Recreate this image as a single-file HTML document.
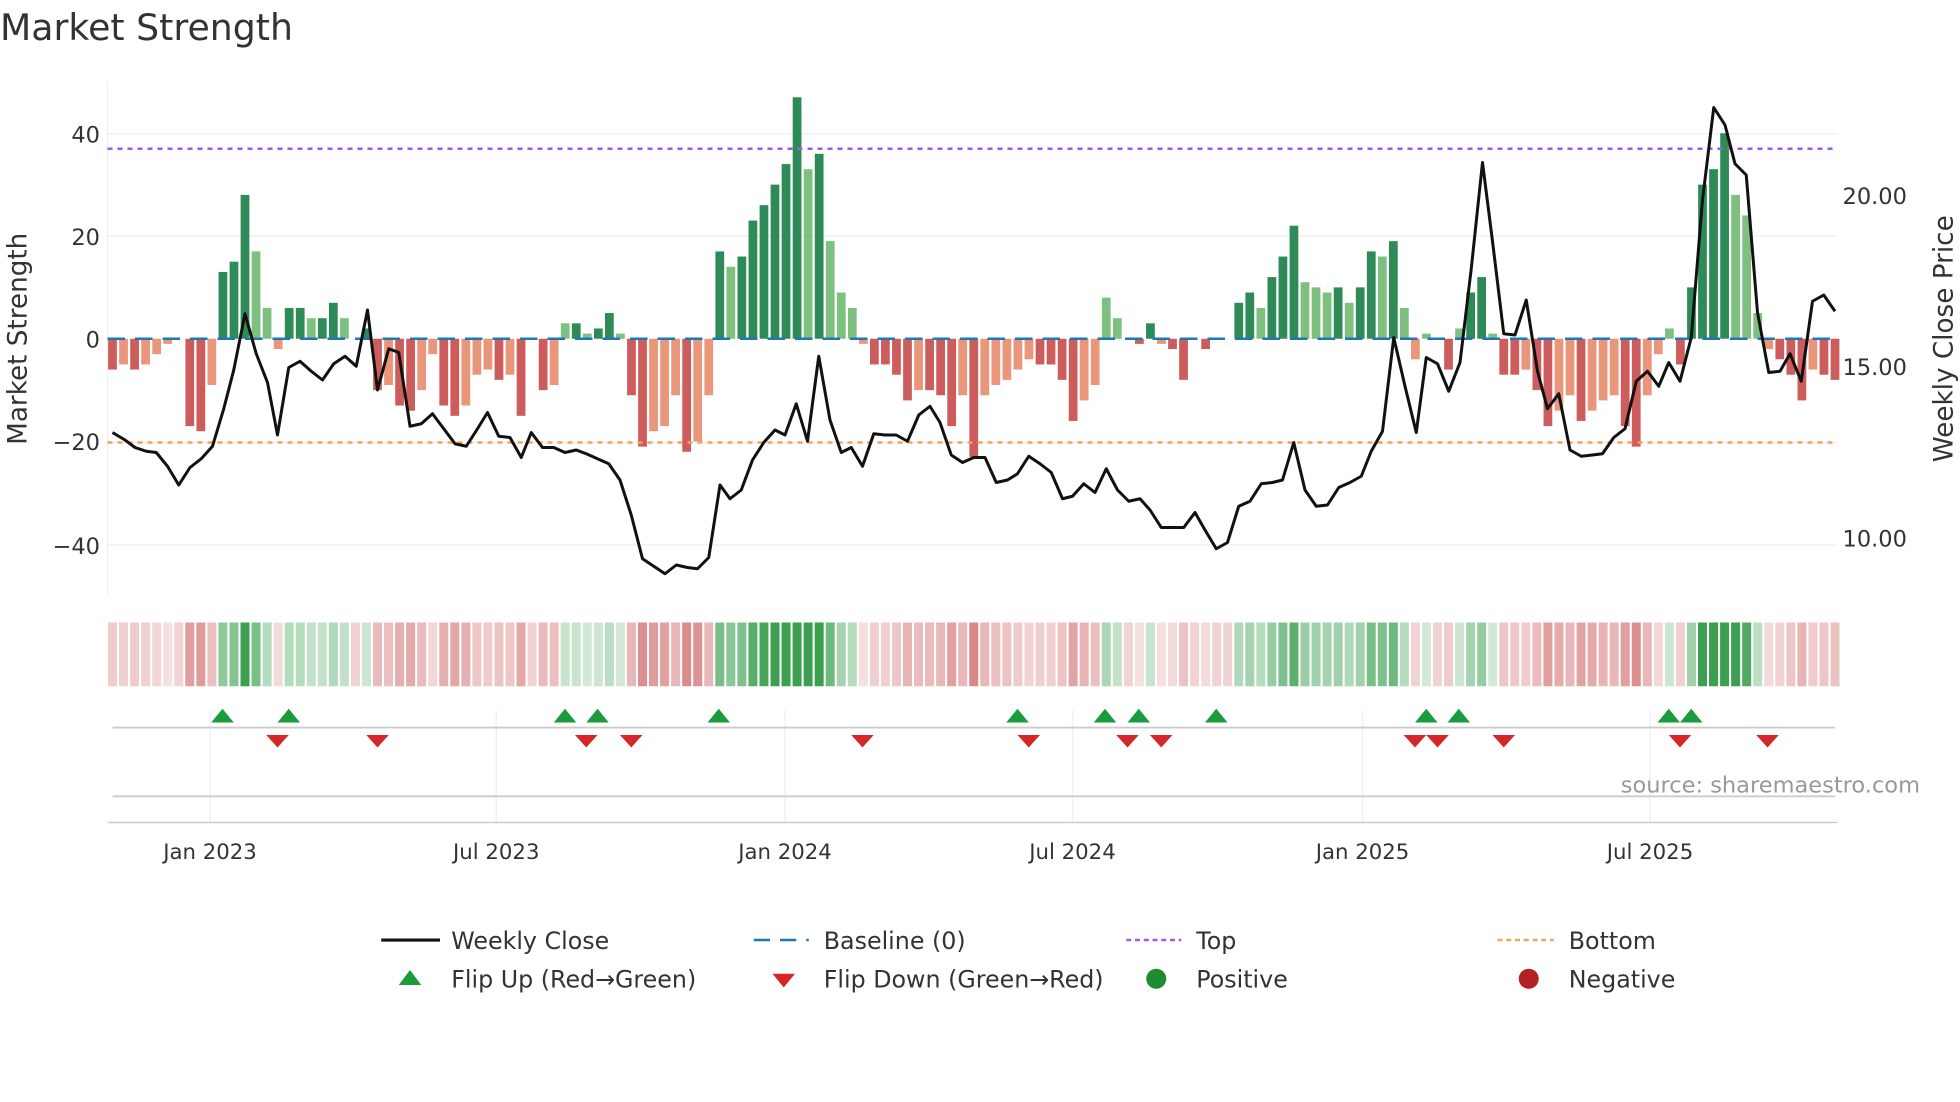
<!DOCTYPE html>
<html><head><meta charset="utf-8"><style>
html,body{margin:0;padding:0;background:#fff;width:1960px;height:1102px;overflow:hidden}
svg{display:block}
text{font-family:"DejaVu Sans","Liberation Sans",sans-serif;fill:#333}
</style></head><body>
<svg id="s" width="1960" height="1102" viewBox="0 0 1568 881.6" xmlns="http://www.w3.org/2000/svg">
<text x="0" y="32" font-size="29">Market Strength</text>
<line x1="86" y1="65" x2="86" y2="478" stroke="#eef0f4"/>
<g stroke="#eef0f4" stroke-width="1.2">
<line x1="86" y1="107" x2="1470" y2="107"/><line x1="86" y1="189" x2="1470" y2="189"/>
<line x1="86" y1="354" x2="1470" y2="354"/><line x1="86" y1="436" x2="1470" y2="436"/>
</g>
<g font-size="18" text-anchor="end">
<text x="80" y="114">40</text><text x="80" y="196">20</text><text x="80" y="278">0</text>
<text x="80" y="360">−20</text><text x="80" y="443">−40</text>
</g>
<g font-size="18">
<text x="1474" y="163">20.00</text><text x="1474" y="300">15.00</text><text x="1474" y="437">10.00</text>
</g>
<text transform="translate(21,271) rotate(-90)" font-size="21" text-anchor="middle">Market Strength</text>
<text transform="translate(1562,271) rotate(-90)" font-size="21" text-anchor="middle">Weekly Close Price</text>
<g id="bars"></g>
<line x1="86" y1="271" x2="1470" y2="271" stroke="#1f77b4" stroke-width="2" stroke-dasharray="14,8"/>
<line x1="86" y1="119" x2="1470" y2="119" stroke="#9b5de5" stroke-width="2" stroke-dasharray="4,4"/>
<line x1="86" y1="354" x2="1470" y2="354" stroke="#f4a261" stroke-width="2" stroke-dasharray="4,4"/>
<polyline fill="none" stroke="#111" stroke-width="2.4" stroke-linejoin="round" points="90,346 100,352 108,358 117,361 125,362 134,373 143,388 152,374 161,367 170,357 179,327 187,296 196,251 205,283 214,306 222,348 231,294 240,289 249,297 258,304 267,291 276,285 285,293 294,248 302,312 311,279 319,282 328,341 337,339 346,331 355,343 364,355 373,357 382,343 390,330 399,349 408,350 417,366 425,346 434,358 443,358 452,362 461,360 469,363 478,367 487,371 496,384 505,412 514,447 523,453 532,459 541,452 550,454 558,455 567,446 576,388 584,399 593,392 602,368 611,354 620,344 628,348 637,323 646,353 655,285 664,336 673,362 681,358 690,373 699,347 708,348 717,348 726,353 735,332 744,325 752,338 761,364 770,370 779,366 788,366 797,386 806,384 814,379 823,365 832,371 841,378 850,399 858,397 867,387 876,394 885,375 894,392 903,401 912,399 920,408 929,422 938,422 947,422 956,410 964,424 973,439 982,434 991,405 1000,401 1009,387 1018,386 1026,384 1035,354 1044,392 1053,405 1062,404 1071,390 1080,386 1089,381 1097,361 1106,345 1115,270 1124,309 1133,346 1141,286 1150,291 1159,313 1168,290 1177,215 1186,130 1194,193 1203,267 1212,268 1221,240 1230,297 1238,327 1247,315 1256,360 1265,365 1274,364 1282,363 1291,350 1300,343 1309,305 1318,297 1327,309 1335,290 1344,305 1353,270 1362,160 1371,86 1380,100 1388,131 1397,140 1406,250 1415,298 1424,297 1432,283 1441,305 1450,241 1459,236 1468,249"/>
<g id="heat"></g>
<g stroke="#eef0f4" stroke-width="1.2">
<line x1="168" y1="568" x2="168" y2="658"/><line x1="397" y1="568" x2="397" y2="658"/><line x1="628" y1="568" x2="628" y2="658"/>
<line x1="858" y1="568" x2="858" y2="658"/><line x1="1090" y1="568" x2="1090" y2="658"/><line x1="1320" y1="568" x2="1320" y2="658"/>
</g>
<line x1="90" y1="582" x2="1468" y2="582" stroke="#ccc" stroke-width="1.5"/>
<line x1="90" y1="637" x2="1468" y2="637" stroke="#ccc" stroke-width="1.5"/>
<line x1="86" y1="658" x2="1470" y2="658" stroke="#ccc" stroke-width="1.2"/>
<g id="mk"></g>
<text x="1536" y="634" font-size="18" fill="#999" style="fill:#999" text-anchor="end">source: sharemaestro.com</text>
<g font-size="17" text-anchor="middle">
<text x="168" y="687">Jan 2023</text><text x="397" y="687">Jul 2023</text><text x="628" y="687">Jan 2024</text>
<text x="858" y="687">Jul 2024</text><text x="1090" y="687">Jan 2025</text><text x="1320" y="687">Jul 2025</text>
</g>
<g font-size="19">
<line x1="305" y1="752" x2="352" y2="752" stroke="#111" stroke-width="2.5"/><text x="361" y="759">Weekly Close</text>
<line x1="603" y1="752" x2="647" y2="752" stroke="#1f77b4" stroke-width="2" stroke-dasharray="13,8"/><text x="659" y="759">Baseline (0)</text>
<line x1="901" y1="752" x2="945" y2="752" stroke="#9b5de5" stroke-width="2" stroke-dasharray="4,3"/><text x="957" y="759">Top</text>
<line x1="1198" y1="752" x2="1243" y2="752" stroke="#f4a261" stroke-width="2" stroke-dasharray="4,3"/><text x="1255" y="759">Bottom</text>
<path d="M319,788 L328,776 L337,788Z" fill="#1a9b3c"/><text x="361" y="790">Flip Up (Red→Green)</text>
<path d="M618,779 L636,779 L627,790Z" fill="#d62728"/><text x="659" y="790">Flip Down (Green→Red)</text>
<circle cx="925" cy="783" r="8" fill="#1e8c2e"/><text x="957" y="790">Positive</text>
<circle cx="1223" cy="783" r="8" fill="#b22222"/><text x="1255" y="790">Negative</text>
</g>
</svg>
<script>
var v=[-6,-5,-6,-5,-3,-1,0,-17,-18,-9,13,15,28,17,6,-2,6,6,4,4,7,4,0,2,-10,-9,-13,-14,-10,-3,-13,-15,-13,-7,-6,-8,-7,-15,0,-10,-9,3,3,1,2,5,1,-11,-21,-18,-17,-11,-22,-20,-11,17,14,16,23,26,30,34,47,33,36,19,9,6,-1,-5,-5,-7,-12,-10,-10,-11,-17,-11,-23,-11,-9,-8,-6,-4,-5,-5,-8,-16,-12,-9,8,4,0,-1,3,-1,-2,-8,0,-2,0,0,7,9,6,12,16,22,11,10,9,10,7,10,17,16,19,6,-4,1,0,-6,2,9,12,1,-7,-7,-6,-10,-17,-14,-11,-16,-14,-12,-11,-17,-21,-11,-3,2,-5,10,30,33,40,28,24,5,-2,-4,-7,-12,-6,-7,-8];
var NS="http://www.w3.org/2000/svg",n=v.length,step=(1468-90)/(n-1);
function el(t,a,p){var e=document.createElementNS(NS,t);for(var k in a)e.setAttribute(k,a[k]);document.getElementById(p).appendChild(e);}
for(var i=0;i<n;i++){var x=90+i*step,y=v[i],h=Math.abs(y)*4.11,prev=i?Math.abs(v[i-1]):0;
 var strong=Math.abs(y)>=prev;var c=y>=0?(strong?"#2e8b57":"#7fbf7f"):(strong?"#cd5c5c":"#e9967a");
 if(y!=0)el("rect",{x:x-3.5,y:y>0?271-h:271,width:7,height:h,fill:c},"bars");
 var a=Math.min(1,0.2+Math.abs(y)/35);var hc=y>=0?"rgba(60,160,80,"+a+")":"rgba(200,80,80,"+(a*0.8)+")";
 if(y==0)hc="rgba(200,80,80,0.25)";
 el("rect",{x:x-3.6,y:498,width:7.2,height:51,fill:hc},"heat");}
[178,231,452,478,575,814,884,911,973,1141,1167,1335,1353].forEach(function(x){el("path",{d:"M"+(x-9)+",578 L"+x+",567 L"+(x+9)+",578Z",fill:"#1a9b3c"},"mk");});
[222,302,469,505,690,823,902,929,1132,1150,1203,1344,1414].forEach(function(x){el("path",{d:"M"+(x-9)+",588 L"+(x+9)+",588 L"+x+",598Z",fill:"#d62728"},"mk");});
</script>
</body></html>
